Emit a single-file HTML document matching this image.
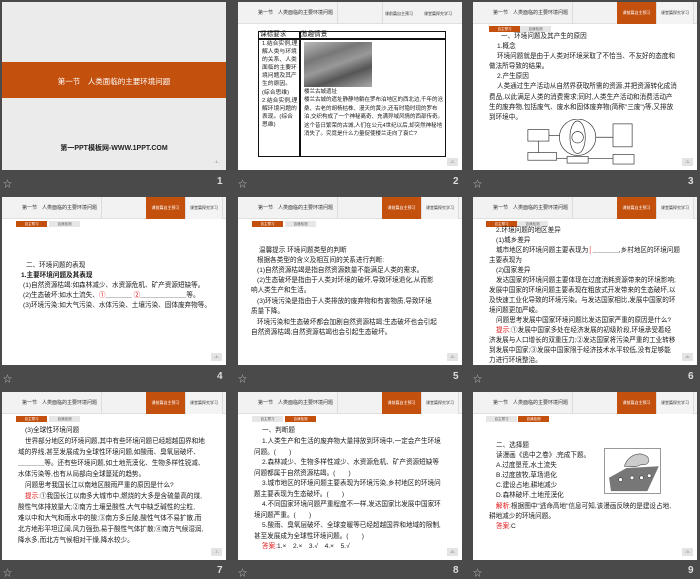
<!DOCTYPE html>
<html><head><meta charset="utf-8"><style>
*{margin:0;padding:0;box-sizing:border-box}
body{width:700px;height:576px;background:#4a4a4a;position:relative;overflow:hidden;font-family:"Liberation Sans","Noto Sans CJK SC",sans-serif}
.s{position:absolute;width:224px;height:168px;background:#fff;overflow:hidden}
.lab{position:absolute;color:#ddd;font-size:10px;font-weight:bold}
.star{position:absolute;color:#bbb;font-size:9px}
.hd{position:absolute;left:0;top:0;width:224px;height:22px;background:#f2f2f2;border-bottom:1px solid #e0e0e0}
.hd .t{position:absolute;left:20px;top:7px;font-size:5px;color:#333;white-space:nowrap}
.hd .sep{position:absolute;left:99px;top:0;width:1px;height:22px;background:#ddd}
.hd .o{position:absolute;left:144px;top:0;width:39px;height:22px;background:#c4500e;color:#fff;font-size:4px;text-align:center;line-height:22px}
.hd .g{position:absolute;left:183px;top:0;width:38px;height:22px;background:#f4f4f4;border-left:1px solid #ddd;border-right:1px solid #ddd;color:#333;font-size:4px;text-align:center;line-height:22px}
.tb{position:absolute;top:24px;height:6px;width:31px;font-size:3.5px;line-height:6px;text-align:center}
.to{background:#c4500e;color:#fff}.tg{background:#e6e6e6;color:#555}
.L{position:absolute;font-size:6.6px;color:#1a1a1a;white-space:nowrap;line-height:8px}
.pg{position:absolute;right:4px;bottom:4px;width:11px;height:8px;background:#e4e4e4;font-size:4px;color:#777;text-align:center;line-height:8px}
.r{color:#e01010}
</style></head><body>

<div class="s" style="left:2px;top:2px;background:#ebebeb">
<div style="position:absolute;left:0;top:60px;width:224px;height:36px;background:#c4500e"></div>
<div style="position:absolute;left:0;top:74px;width:224px;text-align:center;color:#fff;font-size:7.5px">第一节　人类面临的主要环境问题</div>
<div style="position:absolute;left:0;top:141px;width:224px;text-align:center;color:#222;font-size:7px;font-weight:bold">第一PPT模板网-WWW.1PPT.COM</div>
<div class="pg" style="background:none">-1-</div>
</div>

<div class="s" style="left:238px;top:2px">
<div class="hd"><div class="t">第一节　人类面临的主要环境问题</div><div class="sep"></div><div style="position:absolute;left:144px;top:0;width:1px;height:22px;background:#ddd"></div><div style="position:absolute;left:147px;top:9px;font-size:4px;color:#333">课前篇自主预习</div><div style="position:absolute;left:186px;top:9px;font-size:4px;color:#333">课堂篇探究学习</div></div>
<div style="position:absolute;left:20px;top:29px;width:188px;height:126px;border:1.5px solid #111"></div>
<div style="position:absolute;left:20px;top:36px;width:188px;height:1.5px;background:#111"></div>
<div style="position:absolute;left:61px;top:29px;width:1.5px;height:126px;background:#111"></div>
<div class="L" style="left:22px;top:29px">课标要求</div><div class="L" style="left:63px;top:29px">激趣情景</div>
<div class="L" style="left:24px;top:38px;line-height:8.1px;white-space:normal;width:36px;font-size:5.8px">1.结合实例,理解人类与环境的关系、人类面临的主要环境问题及其产生的原因。(综合思维)<br>2.结合实例,理解环境问题的表现。(综合思维)</div>
<div style="position:absolute;left:66px;top:40px;width:68px;height:45px;background:linear-gradient(160deg,#bbb 0%,#777 30%,#999 50%,#555 70%,#aaa 100%)"></div>
<div class="L" style="left:66px;top:86px;font-size:5.5px">楼兰古城遗址</div>
<div class="L" style="left:66px;top:94px;white-space:normal;width:140px;font-size:5.5px;line-height:8.5px">楼兰古城的遗址静静地躺在罗布泊地区的西北边,千年的沧桑、古老的胡杨枯株、漫天的黄沙,还有时隐时现的罗布泊,交织构成了一个神秘离奇、充满异域风情的西部传奇。这个昔日繁荣的古城,人们在公元4世纪以后,却突然神秘地消失了。究竟是什么力量促使楼兰走向了衰亡?</div>
<div class="pg">-2-</div>
</div>

<div class="s" style="left:473px;top:2px">
<div class="hd"><div class="t">第一节　人类面临的主要环境问题</div><div class="sep"></div><div class="o">课前篇自主预习</div><div class="g">课堂篇探究学习</div></div>
<div class="tb to" style="left:16px">自主预习</div><div class="tb tg" style="left:47px">自我检测</div>
<div class="L" style="left:28px;top:31px">一、环境问题及其产生的原因</div>
<div class="L" style="left:24px;top:41px">1.概念</div>
<div class="L" style="left:24px;top:51px">环境问题就是由于人类对环境采取了不恰当、不友好的态度和</div>
<div class="L" style="left:16px;top:61px">做法所导致的结果。</div>
<div class="L" style="left:24px;top:71px">2.产生原因</div>
<div class="L" style="left:24px;top:81px">人类通过生产活动从自然界获取所需的资源,并把资源转化成消</div>
<div class="L" style="left:16px;top:92px">费品,以此满足人类的消费需求;同时,人类生产活动和消费活动产</div>
<div class="L" style="left:16px;top:102px">生的废弃物,包括废气、废水和固体废弃物(简称"三废")等,又排放</div>
<div class="L" style="left:16px;top:112px">到环境中。</div>
<svg style="position:absolute;left:52px;top:117px" width="110" height="48" viewBox="0 0 115 48">
<g fill="none" stroke="#333" stroke-width="0.7">
<circle cx="55" cy="18" r="19"/><ellipse cx="55" cy="18" rx="8" ry="17"/><circle cx="55" cy="18" r="6"/>
<rect x="3" y="10" width="22" height="12"/><rect x="3" y="34" width="30" height="8"/><rect x="44" y="38" width="22" height="7"/><rect x="92" y="4" width="20" height="24"/><rect x="92" y="36" width="22" height="10"/>
<line x1="25" y1="16" x2="36" y2="16"/><line x1="74" y1="18" x2="92" y2="18"/><line x1="33" y1="40" x2="44" y2="40"/><line x1="66" y1="40" x2="92" y2="40"/><line x1="14" y1="22" x2="14" y2="34"/>
</g></svg>
<div class="pg">-3-</div>
</div>

<div class="s" style="left:2px;top:197px">
<div class="hd"><div class="t">第一节　人类面临的主要环境问题</div><div class="sep"></div><div class="o">课前篇自主预习</div><div class="g">课堂篇探究学习</div></div>
<div class="tb to" style="left:14px">自主预习</div><div class="tb tg" style="left:47px">自我检测</div>
<div class="L" style="left:24px;top:65px">二、环境问题的表现</div>
<div class="L" style="left:19px;top:75px;font-weight:bold">1.主要环境问题及其表现</div>
<div class="L" style="left:21px;top:85px">(1)自然资源枯竭:如森林减少、水资源危机、矿产资源短缺等。</div>
<div class="L" style="left:21px;top:95px">(2)生态破坏:如水土流失、<span class="r">①</span>＿＿＿＿ <span class="r">②</span>＿＿＿＿＿＿＿等。</div>
<div class="L" style="left:21px;top:105px">(3)环境污染:如大气污染、水体污染、土壤污染、固体废弃物等。</div>
<div class="pg">-4-</div>
</div>

<div class="s" style="left:238px;top:197px">
<div class="hd"><div class="t">第一节　人类面临的主要环境问题</div><div class="sep"></div><div class="o">课前篇自主预习</div><div class="g">课堂篇探究学习</div></div>
<div class="tb to" style="left:14px">自主预习</div><div class="tb tg" style="left:47px">自我检测</div>
<div class="L" style="left:21px;top:50px">温馨提示 环境问题类型的判断</div>
<div class="L" style="left:19px;top:60px">根据各类型的含义及相互间的关系进行判断:</div>
<div class="L" style="left:19px;top:70px">(1)自然资源枯竭是指自然资源数量不能满足人类的需求。</div>
<div class="L" style="left:19px;top:80px">(2)生态破坏是指由于人类对环境的破坏,导致环境退化,从而影</div>
<div class="L" style="left:13px;top:90px">响人类生产和生活。</div>
<div class="L" style="left:19px;top:101px">(3)环境污染是指由于人类排放的废弃物和有害物质,导致环境</div>
<div class="L" style="left:13px;top:111px">质量下降。</div>
<div class="L" style="left:19px;top:122px">环境污染和生态破坏都会加剧自然资源枯竭;生态破坏也会引起</div>
<div class="L" style="left:13px;top:132px">自然资源枯竭;自然资源枯竭也会引起生态破坏。</div>
<div class="pg">-5-</div>
</div>

<div class="s" style="left:473px;top:197px">
<div class="hd"><div class="t">第一节　人类面临的主要环境问题</div><div class="sep"></div><div class="o">课前篇自主预习</div><div class="g">课堂篇探究学习</div></div>
<div class="tb to" style="left:13px">自主预习</div><div class="tb tg" style="left:44px">自我检测</div>
<div class="L" style="left:23px;top:30px">2.环境问题的地区差异</div>
<div class="L" style="left:23px;top:40px">(1)城乡差异</div>
<div class="L" style="left:23px;top:50px">城市地区的环境问题主要表现为<span class="r">│</span>＿＿＿＿,乡村地区的环境问题</div>
<div class="L" style="left:16px;top:60px">主要表现为</div>
<div class="L" style="left:23px;top:70px">(2)国家差异</div>
<div class="L" style="left:23px;top:80px">发达国家的环境问题主要体现在过度消耗资源带来的环境影响;</div>
<div class="L" style="left:16px;top:90px">发展中国家的环境问题主要表现在粗放式开发带来的生态破坏,以</div>
<div class="L" style="left:16px;top:100px">及快速工业化导致的环境污染。与发达国家相比,发展中国家的环</div>
<div class="L" style="left:16px;top:110px">境问题更加严峻。</div>
<div class="L" style="left:23px;top:120px">问题思考发展中国家环境问题比发达国家严重的原因是什么?</div>
<div class="L" style="left:23px;top:130px"><span class="r">提示:</span>①发展中国家多处在经济发展的初级阶段,环境承受着经</div>
<div class="L" style="left:16px;top:140px">济发展与人口增长的双重压力;②发达国家将污染严重的工业转移</div>
<div class="L" style="left:16px;top:150px">到发展中国家;③发展中国家限于经济技术水平较低,没有足够能</div>
<div class="L" style="left:16px;top:160px">力进行环境整治。</div>
<div class="pg">-6-</div>
</div>

<div class="s" style="left:2px;top:392px">
<div class="hd"><div class="t">第一节　人类面临的主要环境问题</div><div class="sep"></div><div class="o">课前篇自主预习</div><div class="g">课堂篇探究学习</div></div>
<div class="tb to" style="left:14px">自主预习</div><div class="tb tg" style="left:47px">自我检测</div>
<div class="L" style="left:23px;top:35px">(3)全球性环境问题</div>
<div class="L" style="left:23px;top:46px">世界部分地区的环境问题,其中有些环境问题已经超越国界和地</div>
<div class="L" style="left:16px;top:57px">域的界线,甚至发展成为全球性环境问题,如酸雨、臭氧层破坏、</div>
<div class="L" style="left:16px;top:68px">＿＿＿＿等。还有些环境问题,如土地荒漠化、生物多样性锐减、</div>
<div class="L" style="left:16px;top:79px">水体污染等,也有从局部向全球蔓延的趋势。</div>
<div class="L" style="left:23px;top:90px">问题思考我国长江以南地区酸雨严重的原因是什么?</div>
<div class="L" style="left:23px;top:101px"><span class="r">提示:</span>①我国长江以南多大城市中,燃烧的大多是含硫量高的煤,</div>
<div class="L" style="left:16px;top:112px">酸性气体排放量大;②南方土壤呈酸性,大气中缺乏碱性的尘粒,</div>
<div class="L" style="left:16px;top:123px">难以中和大气和雨水中的酸;③南方多丘陵,酸性气体不易扩散,而</div>
<div class="L" style="left:16px;top:134px">北方地形平坦辽阔,风力强劲,易于酸性气体扩散;④南方气候湿润,</div>
<div class="L" style="left:16px;top:145px">降水多,而北方气候相对干燥,降水较少。</div>
<div class="pg">-7-</div>
</div>

<div class="s" style="left:238px;top:392px">
<div class="hd"><div class="t">第一节　人类面临的主要环境问题</div><div class="sep"></div><div class="o">课前篇自主预习</div><div class="g">课堂篇探究学习</div></div>
<div class="tb tg" style="left:14px">自主预习</div><div class="tb to" style="left:47px">自我检测</div>
<div class="L" style="left:24px;top:35px">一、判断题</div>
<div class="L" style="left:24px;top:46px">1.人类生产和生活的废弃物大量排放到环境中,一定会产生环境</div>
<div class="L" style="left:16px;top:57px">问题。(　　)</div>
<div class="L" style="left:24px;top:67px">2.森林减少、生物多样性减少、水资源危机、矿产资源短缺等</div>
<div class="L" style="left:16px;top:78px">问题都属于自然资源枯竭。(　　)</div>
<div class="L" style="left:24px;top:88px">3.城市地区的环境问题主要表现为环境污染,乡村地区的环境问</div>
<div class="L" style="left:16px;top:99px">题主要表现为生态破坏。(　　)</div>
<div class="L" style="left:24px;top:109px">4.不同国家环境问题严重程度不一样,发达国家比发展中国家环</div>
<div class="L" style="left:16px;top:120px">境问题严重。(　　)</div>
<div class="L" style="left:24px;top:130px">5.酸雨、臭氧层破坏、全球变暖等已经超越国界和地域的限制,</div>
<div class="L" style="left:16px;top:141px">甚至发展成为全球性环境问题。(　　)</div>
<div class="L" style="left:24px;top:151px"><span class="r">答案:</span>1.×　2.×　3.√　4.×　5.√</div>
<div class="pg">-8-</div>
</div>

<div class="s" style="left:473px;top:392px">
<div class="hd"><div class="t">第一节　人类面临的主要环境问题</div><div class="sep"></div><div class="o">课前篇自主预习</div><div class="g">课堂篇探究学习</div></div>
<div class="tb tg" style="left:13px">自主预习</div><div class="tb to" style="left:45px">自我检测</div>
<div class="L" style="left:23px;top:50px">二、选择题</div>
<div class="L" style="left:23px;top:60px">读漫画《逃中之卷》,完成下题。</div>
<div class="L" style="left:23px;top:70px">A.过度垦荒,水土流失</div>
<div class="L" style="left:23px;top:80px">B.过度放牧,草场退化</div>
<div class="L" style="left:23px;top:90px">C.建设占地,耕地减少</div>
<div class="L" style="left:23px;top:100px">D.森林破坏,土地荒漠化</div>
<svg style="position:absolute;left:131px;top:56px;border:1px solid #999" width="57" height="46" viewBox="0 0 57 46">
<polygon points="4,30 22,20 56,18 44,44 6,44" fill="#777"/>
<g fill="#fff" stroke="#333" stroke-width="0.6"><circle cx="16" cy="32" r="2"/><circle cx="28" cy="30" r="2"/><circle cx="38" cy="30" r="2"/><circle cx="46" cy="28" r="2"/></g>
<path d="M20 18 C24 6 36 2 44 8 C48 12 44 18 38 16 C32 20 26 18 20 18Z" fill="#ccc" stroke="#444" stroke-width="0.6"/>
</svg>
<div class="L" style="left:23px;top:111px"><span class="r">解析:</span>根据图中"逃命高地"信息可知,该漫画反映的是建设占地,</div>
<div class="L" style="left:16px;top:121px">耕地减少的环境问题。</div>
<div class="L" style="left:23px;top:131px"><span class="r">答案:</span>C</div>
<div class="pg">-9-</div>
</div>

<div class="star" style="left:3px;top:177px">☆</div><div class="lab" style="left:217px;top:176px">1</div>
<div class="star" style="left:238px;top:177px">☆</div><div class="lab" style="left:453px;top:176px">2</div>
<div class="star" style="left:473px;top:177px">☆</div><div class="lab" style="left:688px;top:176px">3</div>
<div class="star" style="left:3px;top:372px">☆</div><div class="lab" style="left:217px;top:371px">4</div>
<div class="star" style="left:238px;top:372px">☆</div><div class="lab" style="left:453px;top:371px">5</div>
<div class="star" style="left:473px;top:372px">☆</div><div class="lab" style="left:688px;top:371px">6</div>
<div class="star" style="left:3px;top:566px">☆</div><div class="lab" style="left:217px;top:565px">7</div>
<div class="star" style="left:238px;top:566px">☆</div><div class="lab" style="left:453px;top:565px">8</div>
<div class="star" style="left:473px;top:566px">☆</div><div class="lab" style="left:688px;top:565px">9</div>
</body></html>
